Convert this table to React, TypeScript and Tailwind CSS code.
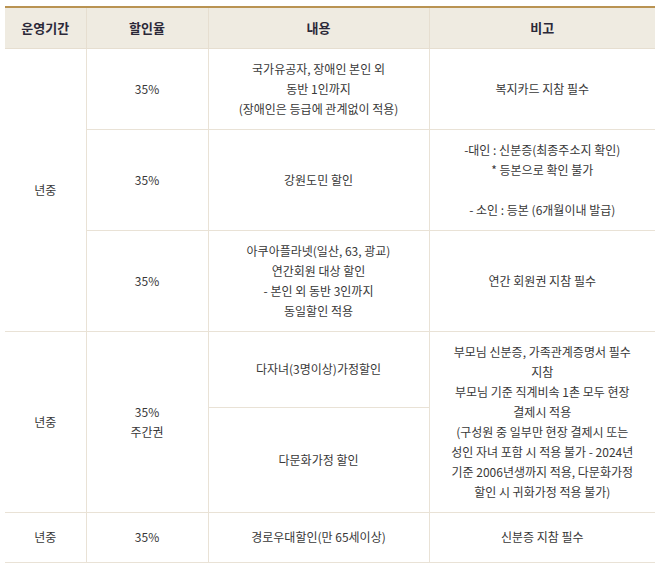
import React from 'react';

const td = 'border-b border-r border-[#e9e2d6] px-[10px] py-[10px] text-center align-middle leading-[20px]';
const tdLast = 'border-b border-[#e9e2d6] px-[10px] py-[10px] text-center align-middle leading-[20px]';

export default function App() {
  return (
    <div className="bg-white min-h-[571px] pt-[6px] pl-[5px] font-['Noto_Sans_CJK_KR','Noto_Sans',sans-serif] text-[12px] text-[#383838]">
      <table className="w-[650px] table-fixed border-collapse border-t-2 border-t-[#b99352]">
        <colgroup>
          <col className="w-[81px]" />
          <col className="w-[122px]" />
          <col className="w-[221px]" />
          <col className="w-[226px]" />
        </colgroup>
        <thead>
          <tr className="bg-[#efebe1] h-[41px] text-[13px] font-bold text-[#2b2838]">
            <th className="border-b border-r border-[#e6ded0] font-bold">운영기간</th>
            <th className="border-b border-r border-[#e6ded0] font-bold">할인율</th>
            <th className="border-b border-r border-[#e6ded0] font-bold">내용</th>
            <th className="border-b border-[#e6ded0] font-bold">비고</th>
          </tr>
        </thead>
        <tbody>
          <tr className="h-[79px]">
            <td rowSpan={3} className={td}>년중</td>
            <td className={td}>35%</td>
            <td className={td}>
              국가유공자, 장애인 본인 외<br />
              동반 1인까지<br />
              (장애인은 등급에 관계없이 적용)
            </td>
            <td className={tdLast}>복지카드 지참 필수</td>
          </tr>
          <tr className="h-[101px]">
            <td className={td}>35%</td>
            <td className={td}>강원도민 할인</td>
            <td className={tdLast}>
              -대인 : 신분증(최종주소지 확인)<br />
              * 등본으로 확인 불가<br />
              <br />
              - 소인 : 등본 (6개월이내 발급)
            </td>
          </tr>
          <tr className="h-[98px]">
            <td className={td}>35%</td>
            <td className={td}>
              아쿠아플라넷(일산, 63, 광교)<br />
              연간회원 대상 할인<br />
              - 본인 외 동반 3인까지<br />
              동일할인 적용
            </td>
            <td className={tdLast}>연간 회원권 지참 필수</td>
          </tr>
          <tr className="h-[75px]">
            <td rowSpan={2} className={td}>년중</td>
            <td rowSpan={2} className={td}>
              35%<br />
              주간권
            </td>
            <td className={td}>다자녀(3명이상)가정할인</td>
            <td rowSpan={2} className={tdLast}>
              부모님 신분증, 가족관계증명서 필수<br />
              지참<br />
              부모님 기준 직계비속 1촌 모두 현장<br />
              결제시 적용<br />
              (구성원 중 일부만 현장 결제시 또는<br />
              성인 자녀 포함 시 적용 불가 - 2024년<br />
              기준 2006년생까지 적용, 다문화가정<br />
              할인 시 귀화가정 적용 불가)
            </td>
          </tr>
          <tr className="h-[103px]">
            <td className={td}>다문화가정 할인</td>
          </tr>
          <tr className="h-[50px]">
            <td className={td}>년중</td>
            <td className={td}>35%</td>
            <td className={td}>경로우대할인(만 65세이상)</td>
            <td className={tdLast}>신분증 지참 필수</td>
          </tr>
        </tbody>
      </table>
    </div>
  );
}
